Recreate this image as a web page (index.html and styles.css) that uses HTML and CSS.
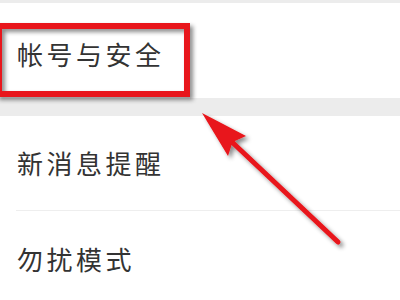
FILE: index.html
```html
<!DOCTYPE html>
<html lang="zh">
<head>
<meta charset="utf-8">
<link rel="stylesheet" href="styles.css">
</head>
<body>
<div class="screen">
  <div class="top-strip"></div>
  <div class="item item-first"><span class="label">帐号与安全</span></div>
  <div class="band"></div>
  <div class="item item-divided"><span class="label">新消息提醒</span></div>
  <div class="item"><span class="label">勿扰模式</span></div>
  <svg class="annotation" width="400" height="300" viewBox="0 0 400 300" xmlns="http://www.w3.org/2000/svg">
    <defs>
      <filter id="shadow" x="-20%" y="-20%" width="140%" height="140%">
        <feDropShadow dx="3" dy="3" stdDeviation="2" flood-color="#000" flood-opacity="0.45"/>
      </filter>
    </defs>
    <g filter="url(#shadow)">
      <rect x="-1" y="26" width="188" height="68" fill="none" stroke="#e8141a" stroke-width="6"/>
      <line x1="338" y1="242" x2="232" y2="142" stroke="#e8141a" stroke-width="5" stroke-linecap="round"/>
      <polygon points="202,113 246,136 232.5,142 228,156" fill="#e8141a"/>
    </g>
  </svg>
</div>
</body>
</html>
```
FILE: styles.css
```css
html, body {
  margin: 0;
  padding: 0;
  background: #ffffff;
}
.screen {
  position: relative;
  width: 400px;
  height: 300px;
  overflow: hidden;
  display: flex;
  flex-direction: column;
  font-family: "Noto Sans CJK SC", "Noto Sans", sans-serif;
}
.top-strip {
  height: 3px;
  flex: none;
  background: #ececec;
}
.item {
  flex: none;
  height: 95px;
  display: flex;
  align-items: center;
  padding-left: 17px;
  box-sizing: border-box;
}
.item-first {
  padding-top: 6px;
}
.item-divided {
  position: relative;
  border-bottom: 1px solid #eeeeee;
  margin-left: 16px;
  padding-left: 1px;
}
.band {
  flex: none;
  height: 18px;
  background: #ececec;
}
.label {
  font-size: 26px;
  line-height: 26px;
  letter-spacing: 3.5px;
  color: #333333;
}
.annotation {
  position: absolute;
  left: 0;
  top: 0;
}
```
